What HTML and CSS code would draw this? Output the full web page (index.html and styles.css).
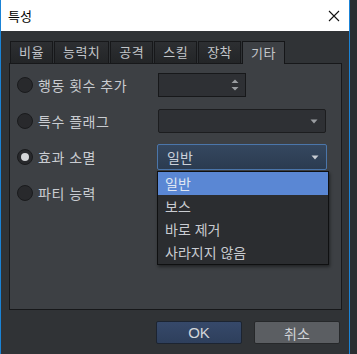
FILE: index.html
```html
<!DOCTYPE html>
<html lang="ko">
<head>
<meta charset="utf-8">
<title>특성</title>
<link rel="stylesheet" href="styles.css">
</head>
<body>
<div class="window">
  <div class="titlebar">
    <span class="title">특성</span>
    <svg class="close" width="12" height="12" viewBox="0 0 12 12"><path d="M1 1L11 11M11 1L1 11" stroke="#111" stroke-width="1.1" fill="none"/></svg>
  </div>
  <div class="client">
    <div class="tabs">
      <div class="tab">비율</div>
      <div class="tab">능력치</div>
      <div class="tab">공격</div>
      <div class="tab">스킬</div>
      <div class="tab">장착</div>
      <div class="tab active">기타</div>
    </div>
    <div class="panel">
      <div class="row">
        <span class="radio"></span><span class="label">행동 횟수 추가</span>
        <div class="spin">
          <span class="spinarrows">
            <svg width="8" height="16" viewBox="0 0 8 16"><path d="M0.5 6L4 2.5L7.5 6Z M0.5 10L4 13.5L7.5 10Z" fill="#9a9da1"/></svg>
          </span>
        </div>
      </div>
      <div class="row">
        <span class="radio"></span><span class="label">특수 플래그</span>
        <div class="combo">
          <span class="value"></span>
          <svg class="arrow" width="8" height="5" viewBox="0 0 8 5"><path d="M0.5 0.5H7.5L4 4.5Z" fill="#9a9da1"/></svg>
        </div>
      </div>
      <div class="row">
        <span class="radio checked"></span><span class="label">효과 소멸</span>
        <div class="combo focus">
          <span class="value">일반</span>
          <svg class="arrow" width="8" height="5" viewBox="0 0 8 5"><path d="M0.5 0.5H7.5L4 4.5Z" fill="#c8ccd2"/></svg>
        </div>
      </div>
      <div class="row">
        <span class="radio"></span><span class="label">파티 능력</span>
      </div>
      <ul class="dropdown">
        <li class="sel">일반</li>
        <li>보스</li>
        <li>바로 제거</li>
        <li>사라지지 않음</li>
      </ul>
    </div>
    <div class="buttons">
      <button class="btn ok">OK</button>
      <button class="btn">취소</button>
    </div>
  </div>
</div>
</body>
</html>
```
FILE: styles.css
```css
body {
	margin: 0;
	background: #2b2e31;
	font-family: "Noto Sans CJK KR", "Noto Sans", sans-serif;
	color: #c9ccd1;
}
.window {
	width: 348px;
	height: 354px;
	border-left: 1px solid #1a83d6;
	border-right: 1px solid #1a83d6;
	background: #303336;
	display: flex;
	flex-direction: column;
}
.titlebar {
	height: 31px;
	background: #ffffff;
	display: flex;
	align-items: center;
	justify-content: space-between;
	padding: 0 9px 0 7px;
}
.title {
	font-size: 13px;
	color: #000;
}
.client {
	padding: 10px 7px 0 8px;
}
.tabs {
	display: flex;
	gap: 1px;
	margin-left: 1px;
	height: 22px;
	align-items: flex-end;
}
.tab {
	height: 22px;
	padding: 0 8px;
	font-size: 13px;
	letter-spacing: 0.5px;
	line-height: 20px;
	color: #c3c6ca;
	background: linear-gradient(#2d2f32, #232527);
	border: 1px solid #17181a;
	border-bottom: none;
	box-sizing: border-box;
}
.tab.active {
	background: #3d4044;
	border-color: #151618;
	height: 23px;
	position: relative;
	top: 1px;
	z-index: 1;
	line-height: 22px;
}
.panel {
	position: relative;
	height: 247px;
	box-sizing: border-box;
	background: #3d4044;
	border: 1px solid #17181a;
	padding: 9px 0 0 7px;
	display: flex;
	flex-direction: column;
	gap: 12px;
}
.row {
	height: 24px;
	display: flex;
	align-items: center;
}
.radio {
	width: 16px;
	height: 16px;
	box-sizing: border-box;
	border-radius: 50%;
	background: #28292c;
	border: 1px solid #1a1b1d;
	display: flex;
	align-items: center;
	justify-content: center;
}
.radio.checked::after {
	content: "";
	width: 8px;
	height: 8px;
	border-radius: 50%;
	background: #d4d6d8;
}
.label {
	width: 120px;
	margin-left: 5px;
	font-size: 14px;
	letter-spacing: 0.5px;
	color: #c9ccd1;
}
.spin {
	width: 88px;
	height: 24px;
	box-sizing: border-box;
	background: #2e3034;
	border: 1px solid #17181a;
	display: flex;
	justify-content: flex-end;
	align-items: center;
	padding-right: 6px;
}
.spinarrows {
	display: flex;
}
.combo {
	width: 168px;
	height: 24px;
	box-sizing: border-box;
	background: #2e3034;
	border: 1px solid #1c1d1f;
	border-radius: 2px;
	display: flex;
	align-items: center;
	justify-content: space-between;
	padding: 0 7px 0 9px;
}
.combo.focus {
	width: 170px;
	height: 26px;
	margin-left: -1px;
	background: linear-gradient(#35475f, #2b3b50);
	border: 1px solid #4b76aa;
	font-size: 14px;
	color: #c9d0da;
}
.dropdown {
	position: absolute;
	left: 147px;
	top: 107px;
	width: 172px;
	margin: 0;
	padding: 0;
	list-style: none;
	background: #2b2d30;
	border: 1px solid #0f1011;
	box-sizing: border-box;
	box-shadow: 1px 2px 3px rgba(0, 0, 0, 0.45);
	z-index: 2;
}
.dropdown li {
	height: 23px;
	line-height: 23px;
	padding-left: 7px;
	font-size: 14px;
	color: #c9ccd1;
}
.dropdown li.sel {
	background: #5a87d4;
	color: #dfe6f2;
}
.buttons {
	display: flex;
	justify-content: flex-end;
	gap: 12px;
	margin-top: 11px;
	padding-right: 2px;
}
.btn {
	width: 86px;
	height: 23px;
	font-family: "Liberation Sans", "Noto Sans CJK KR", sans-serif;
	font-size: 14px;
	color: #d2d5d9;
	background: #5b5e62;
	border: 1px solid #26282a;
	border-radius: 2px;
	padding: 0;
}
.btn.ok {
	background: linear-gradient(#36496a, #2e3f5c);
	border-color: #1c2431;
	font-size: 15px;
}
```
